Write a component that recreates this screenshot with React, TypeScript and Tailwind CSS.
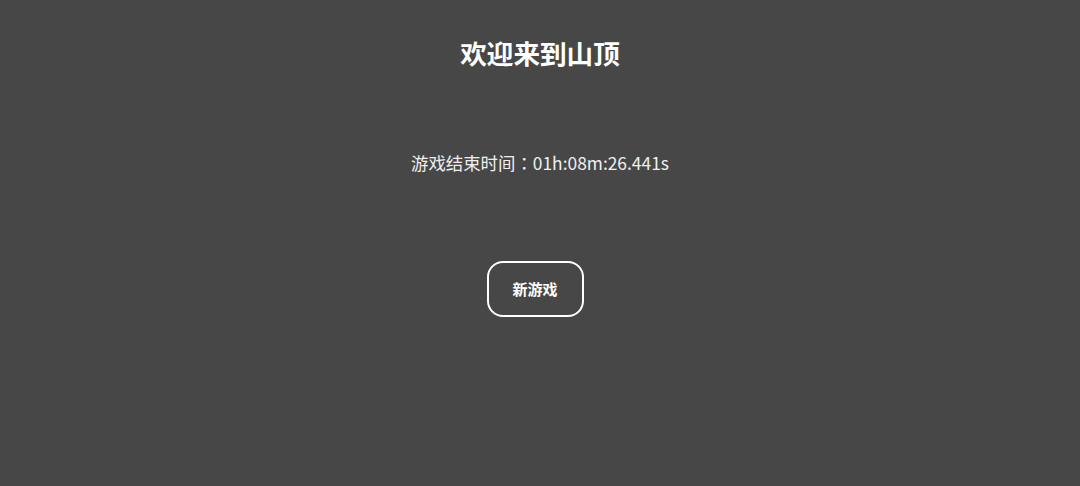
import React from 'react';

const App: React.FC = () => {
    return (
        <div
            className="w-[1080px] h-[486px] bg-[#474747] text-white flex flex-col items-center"
            style={ { fontFamily: '"Noto Sans CJK JP", "Noto Sans CJK SC", "Noto Sans", sans-serif' } }
        >
            <h1 className="mt-[36px] text-[26.6px] leading-[34px] font-bold">欢迎来到山顶</h1>
            <p className="mt-[80px] text-[17.4px] leading-[26px] text-[#efefef]">
                游戏结束时间：01h:08m:26.441s
            </p>
            <button
                type="button"
                className="mt-[85px] mr-[10px] w-[97px] h-[56px] border-2 border-white rounded-[16px] text-[15px] font-bold text-white"
            >
                新游戏
            </button>
        </div>
    );
};

export default App;
